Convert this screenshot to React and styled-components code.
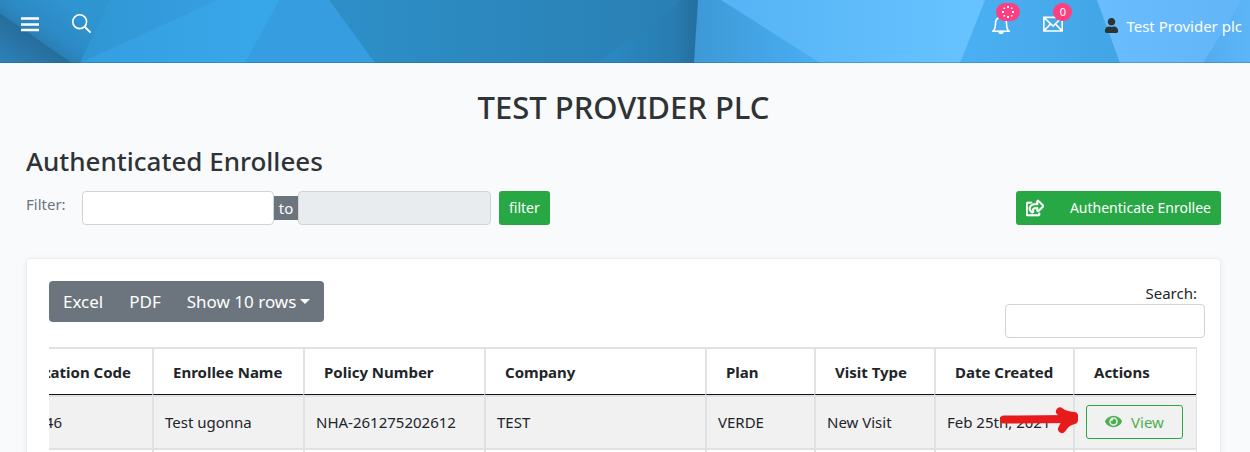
import React from "react";
import styled, { createGlobalStyle } from "styled-components";
import { FaUser, FaEye, FaRegShareSquare } from "react-icons/fa";

const GlobalStyle = createGlobalStyle`
  *, *::before, *::after { box-sizing: border-box; }
  body {
    margin: 0;
    background: #f9fafc;
    color: #212529;
    font-family: "Noto Sans", "Open Sans", sans-serif;
    font-size: 15px;
    line-height: 20px;
  }
  button, input { font: inherit; }
`;

const Page = styled.div`
  height: 100vh;
  overflow: hidden;
`;

const TopBar = styled.header`
  position: relative;
  display: flex;
  align-items: center;
  justify-content: space-between;
  height: 63px;
  padding: 0 8px 0 20px;
  background: #2f93d0;
`;

const Backdrop = styled.svg`
  position: absolute;
  inset: 0;
  width: 100%;
  height: 100%;
`;

const BarGroup = styled.div`
  position: relative;
  display: flex;
  align-items: center;
  gap: ${(p) => p.$gap};
  margin-bottom: 16px;
`;

const IconButton = styled.button`
  position: relative;
  display: flex;
  padding: 0;
  border: 0;
  background: none;
  color: #fff;
  cursor: pointer;
`;

const Badge = styled.span`
  position: absolute;
  left: ${(p) => p.$left};
  top: -11px;
  display: flex;
  align-items: center;
  justify-content: center;
  width: ${(p) => p.$width};
  height: 18px;
  border-radius: 9px;
  background: #ff3f7f;
  color: #fff;
  font-size: 11px;
  line-height: 18px;
`;

const UserLink = styled.a`
  display: flex;
  align-items: center;
  gap: 7px;
  margin: 4px 0 0 8px;
  color: #fff;
  text-decoration: none;
  white-space: nowrap;

  svg { color: #2d3436; }
`;

const Content = styled.main`
  padding: 24px 29px 0 26px;
`;

const Title = styled.h1`
  margin: 0;
  color: #2f3335;
  font-size: 31px;
  font-weight: 500;
  line-height: 40px;
  text-align: center;
`;

const Subtitle = styled.h2`
  margin: 18px 0 14px;
  color: #2f3335;
  font-size: 26px;
  font-weight: 500;
  line-height: 32px;
`;

const FilterRow = styled.div`
  display: flex;
  align-items: center;
  height: 34px;
`;

const FilterLabel = styled.label`
  width: 56px;
  margin-bottom: 8px;
  color: #6c757d;
`;

const TextBox = styled.input`
  width: ${(p) => p.$width};
  height: 34px;
  padding: 0 12px;
  border: 1px solid #ced4da;
  border-radius: 4px;
  background: #fff;

  &:disabled { background: #e9ecef; }
`;

const Joiner = styled.span`
  width: 24px;
  height: 24px;
  padding-top: 2px;
  background: #6c757d;
  color: #fff;
  text-align: center;
`;

const GreenButton = styled.button`
  display: flex;
  align-items: center;
  gap: 26px;
  height: 34px;
  padding: 0 10px;
  margin-left: ${(p) => (p.$end ? "auto" : "8px")};
  border: 0;
  border-radius: 3px;
  background: #28a745;
  color: #fff;
  font-size: 14px;
  cursor: pointer;

  svg {
    stroke: currentColor;
    stroke-width: 22;
  }
`;

const Card = styled.section`
  margin-top: 33px;
  padding: 22px 23px 0 22px;
  border: 1px solid #ebedef;
  border-radius: 4px;
  background: #fff;
  box-shadow: 0 1px 6px rgba(0, 0, 0, 0.06);
`;

const CardTools = styled.div`
  display: flex;
  justify-content: space-between;
  align-items: flex-start;
  height: 66px;
`;

const ButtonGroup = styled.div`
  display: flex;
  height: 41px;
  border-radius: 4px;
  background: #6c757d;
  overflow: hidden;
`;

const GroupButton = styled.button`
  display: flex;
  align-items: center;
  gap: 4px;
  padding: 0 14px;
  border: 0;
  background: none;
  color: #fff;
  font-size: 17px;
  cursor: pointer;

  & + & { padding-left: 12px; }
`;

const Caret = styled.span`
  border: 5px solid transparent;
  border-top-color: #fff;
  border-bottom: 0;
`;

const SearchField = styled.div`
  display: flex;
  flex-direction: column;
  align-items: flex-end;
  gap: 1px;
  padding-top: 2px;

  input { margin-right: -8px; }
`;

const TableViewport = styled.div`
  display: flex;
  justify-content: flex-end;
  overflow: hidden;
`;

const Table = styled.table`
  flex: none;
  width: calc(100% + 88px);
  table-layout: fixed;
  border-collapse: separate;
  border-spacing: 0;
  border-right: 1px solid #dee2e6;
`;

const HeadCell = styled.th`
  height: 48px;
  padding: 0 0 0 19px;
  border-top: 2px solid #dee2e6;
  border-left: 2px solid #dee2e6;
  border-bottom: 1px solid #111;
  text-align: left;
  font-weight: 700;
  white-space: nowrap;

  &:first-child {
    padding-right: 21px;
    text-align: right;
  }
`;

const Cell = styled.td`
  position: relative;
  height: 53px;
  padding: 0 0 2px 11px;
  border-top: 2px solid #dee2e6;
  border-left: 2px solid #dee2e6;
  background: ${(p) => (p.$striped ? "#f1f1f1" : "#fff")};
  white-space: nowrap;

  &:first-child {
    padding-right: 90px;
    text-align: right;
  }
`;

const ViewButton = styled.button`
  display: flex;
  align-items: center;
  justify-content: center;
  gap: 9px;
  width: 97px;
  height: 34px;
  border: 1px solid #28a745;
  border-radius: 3px;
  background: none;
  color: #4caf50;
  cursor: pointer;
`;

const Pointer = styled.svg`
  position: absolute;
  z-index: 1;
  right: -6px;
  top: 9px;
`;

const columns = [
  { name: "Authorization Code", width: 191 },
  { name: "Enrollee Name", width: 151 },
  { name: "Policy Number", width: 181 },
  { name: "Company" },
  { name: "Plan", width: 109 },
  { name: "Visit Type", width: 120 },
  { name: "Date Created", width: 139 },
  { name: "Actions", width: 123 },
];

function BarArt() {
  const fade = (id, x1, x2, from, to, y1 = 0, y2 = 0) => (
    <linearGradient id={id} gradientUnits="userSpaceOnUse" x1={x1} x2={x2} y1={y1} y2={y2}>
      <stop offset="0" stopColor={from} />
      <stop offset="1" stopColor={to} />
    </linearGradient>
  );
  return (
    <Backdrop viewBox="0 0 1250 63" preserveAspectRatio="none" aria-hidden="true">
      <defs>
        <linearGradient id="slope" gradientUnits="userSpaceOnUse" x1="36" y1="38" x2="64" y2="-2">
          <stop offset="0" stopColor="#2a7fb5" />
          <stop offset="0.3" stopColor="#2d8ac5" />
          <stop offset="1" stopColor="#2f95d1" />
        </linearGradient>
        {fade("corner", 12, 36, "#2e83bb", "#266d9b", 73, 38)}
        {fade("mid", 60, 220, "#2f95d1", "#369fe2")}
        {fade("bright", 90, 260, "#349fe0", "#38a7e9")}
        {fade("deep", 330, 694, "#2e8fc8", "#297fb3")}
        {fade("fold", 610, 694, "#2a88c1", "#2779ab")}
        {fade("edge", 676, 697, "#236c9a00", "#236c9acc")}
        {fade("rise", 695, 810, "#3d99d6", "#49adf1")}
        {fade("sky", 730, 970, "#56b3f5", "#67c3ff")}
        {fade("bell", 965, 1115, "#4bb0f3", "#42a5e5")}
        {fade("user", 1100, 1240, "#69bdff", "#62b6f8")}
        {fade("end", 1205, 1250, "#53aded", "#5cb5f7")}
      </defs>
      <rect width="1250" height="63" fill="url(#mid)" />
      <path d="M0 0H110L80 63H72L0 13Z" fill="url(#slope)" />
      <path d="M0 13L72 63H0Z" fill="url(#corner)" />
      <path d="M80 63L218 0H330V63Z" fill="url(#bright)" />
      <path d="M279 0H400V63H245Z" fill="#369ee0" />
      <path d="M329 0H700V63H375Z" fill="url(#deep)" />
      <path d="M682 0H700V63H597Z" fill="url(#fold)" />
      <path d="M670 0H700V63H670Z" fill="url(#edge)" />
      <path d="M698 0H830V63H694Z" fill="url(#rise)" />
      <path d="M721 0H990V63H820Z" fill="url(#sky)" />
      <path d="M985 0H1110L1125 63H960Z" fill="url(#bell)" />
      <path d="M1097 0H1250V63H1120Z" fill="url(#user)" />
      <path d="M1242 0H1250V63H1203Z" fill="url(#end)" />
      <rect y="62" width="1250" height="1" fill="#1f6591" opacity="0.35" />
    </Backdrop>
  );
}

export default function App() {
  return (
    <Page>
      <GlobalStyle />
      <TopBar>
        <BarArt />
        <BarGroup $gap="32px">
          <IconButton aria-label="Menu">
            <svg width="20" height="20" viewBox="0 0 20 20" stroke="#fff" strokeWidth="2.4">
              <path d="M1 4.500H19M1 10.500H19M1 16H19" />
            </svg>
          </IconButton>
          <IconButton aria-label="Search">
            <svg width="20" height="20" viewBox="0 0 20 20" fill="none" stroke="#fff" strokeWidth="1.6">
              <circle cx="7.7" cy="7.7" r="6.9" />
              <path d="M12.7 12.7L18.6 18.6" strokeWidth="2" />
            </svg>
          </IconButton>
        </BarGroup>
        <BarGroup $gap="33px">
          <IconButton aria-label="Notifications">
            <svg width="18" height="20" viewBox="0 0 18 20" fill="none" stroke="#fff" strokeWidth="1.6">
              <path d="M1 17.2C3 16 3.4 13.500 3.500 9C3.600 5.500 5.500 3.500 9 3.500S14.400 5.500 14.500 9C14.600 13.500 15 16 17 17.200Z" />
              <path d="M7 17.500A2 1.800 0 0 0 11 17.500Z" fill="#fff" />
            </svg>
            <Badge $left="4px" $width="24px">
              <svg width="12" height="12" viewBox="0 0 12 12" fill="#fff">
                <path d="M5 0h2v2H5zM5 10h2v2H5zM0 5h2v2H0zM10 5h2v2h-2zM1.500 1.500h1.600v1.600H1.500zM8.900 1.500h1.600v1.600H8.900zM1.500 8.900h1.600v1.600H1.500zM8.900 8.900h1.600v1.600H8.900z" />
              </svg>
            </Badge>
          </IconButton>
          <IconButton aria-label="Messages">
            <svg width="20" height="20" viewBox="0 0 20 20" fill="none" stroke="#fff" strokeWidth="1.7">
              <path d="M.8 3.300H19.200V17H.8ZM1 3.500L10 12L19 3.500M1 16.800L7.500 10M19 16.800L12.500 10" />
            </svg>
            <Badge $left="10px" $width="19px">0</Badge>
          </IconButton>
          <UserLink href="#account">
            <FaUser size={15} />
            Test Provider plc
          </UserLink>
        </BarGroup>
      </TopBar>

      <Content>
        <Title>TEST PROVIDER PLC</Title>
        <Subtitle>Authenticated Enrollees</Subtitle>
        <FilterRow>
          <FilterLabel htmlFor="from">Filter:</FilterLabel>
          <TextBox id="from" type="text" $width="192px" />
          <Joiner>to</Joiner>
          <TextBox aria-label="to" type="text" $width="193px" disabled />
          <GreenButton>filter</GreenButton>
          <GreenButton $end>
            <FaRegShareSquare size={18} />
            Authenticate Enrollee
          </GreenButton>
        </FilterRow>

        <Card>
          <CardTools>
            <ButtonGroup>
              <GroupButton>Excel</GroupButton>
              <GroupButton>PDF</GroupButton>
              <GroupButton>
                Show 10 rows
                <Caret />
              </GroupButton>
            </ButtonGroup>
            <SearchField>
              <label htmlFor="search">Search:</label>
              <TextBox id="search" type="search" $width="200px" />
            </SearchField>
          </CardTools>
          <TableViewport>
            <Table>
              <colgroup>
                {columns.map((c) => (
                  <col key={c.name} width={c.width} />
                ))}
              </colgroup>
              <thead>
                <tr>
                  {columns.map((c) => (
                    <HeadCell key={c.name} scope="col">{c.name}</HeadCell>
                  ))}
                </tr>
              </thead>
              <tbody>
                <tr>
                  <Cell $striped>46</Cell>
                  <Cell $striped>Test ugonna</Cell>
                  <Cell $striped>NHA-261275202612</Cell>
                  <Cell $striped>TEST</Cell>
                  <Cell $striped>VERDE</Cell>
                  <Cell $striped>New Visit</Cell>
                  <Cell $striped>
                    Feb 25th, 2021
                    <Pointer width="80" height="28" viewBox="0 0 80 28" fill="none" stroke="#e81b1c" strokeLinecap="round" strokeLinejoin="round">
                      <path d="M5 13.500L72 13" strokeWidth="8" />
                      <path d="M61 5.500C65 8.500 69 9.500 75 10L75 14C70 15 66 18 63 23L68 13Z" strokeWidth="8" fill="#e81b1c" />
                    </Pointer>
                  </Cell>
                  <Cell $striped>
                    <ViewButton>
                      <FaEye size={17} />
                      View
                    </ViewButton>
                  </Cell>
                </tr>
                <tr>
                  {columns.map((c) => (
                    <Cell key={c.name} />
                  ))}
                </tr>
              </tbody>
            </Table>
          </TableViewport>
        </Card>
      </Content>
    </Page>
  );
}
